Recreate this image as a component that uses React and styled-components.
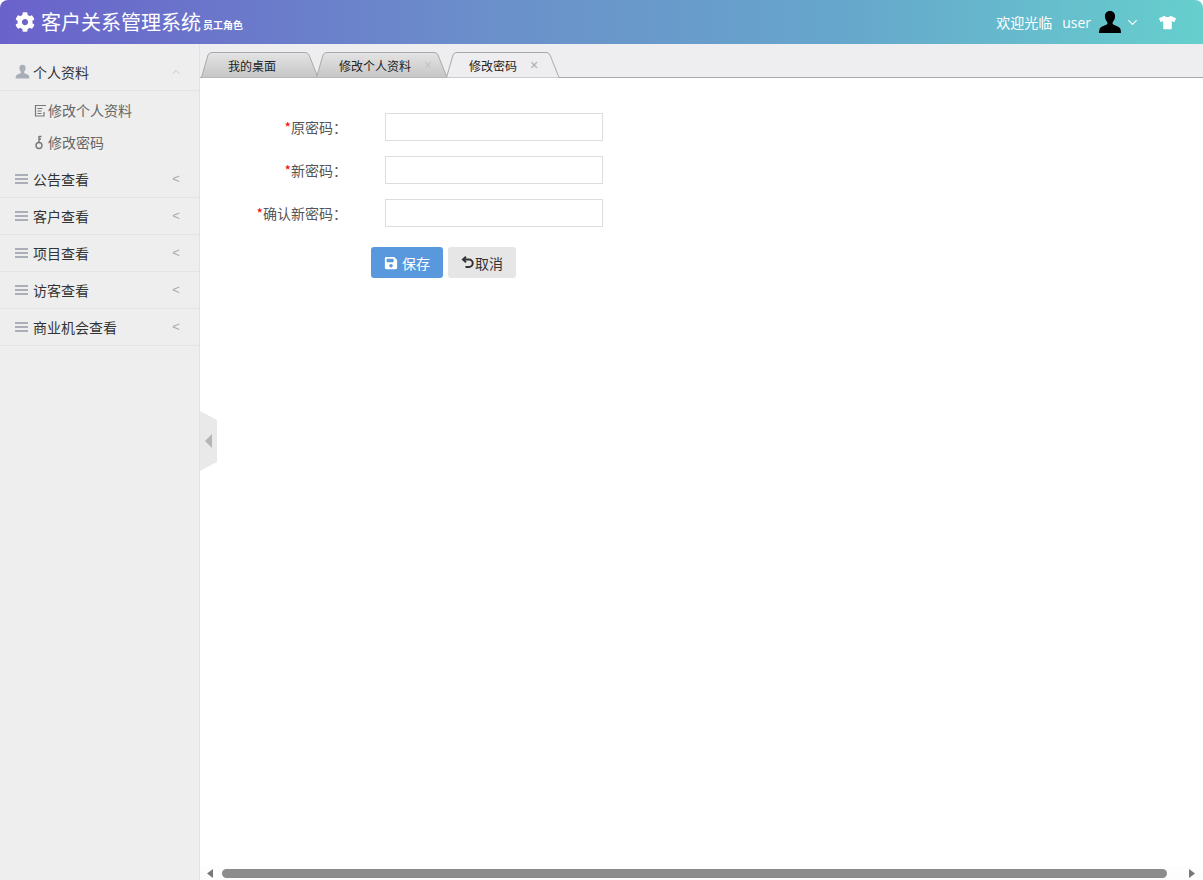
import React from "react";
import styled, { createGlobalStyle } from "styled-components";
import { FaCog, FaTshirt, FaSave } from "react-icons/fa";
import { ChevronDown, ChevronUp } from "lucide-react";

const Global = createGlobalStyle`
  html, body { margin: 0; padding: 0; height: 100%; background: #fff; overflow: hidden; }
  * { box-sizing: border-box; }
  body { font-family: "Liberation Sans", "Noto Sans CJK SC", sans-serif; font-size: 14px; color: #333; }
`;

const Page = styled.div`display: flex; flex-direction: column; width: 1203px; height: 880px; overflow: hidden;`;
const Header = styled.header`
  height: 44px; flex: none; display: flex; align-items: center; padding: 0 27px 0 15px; color: #fff;
  background: linear-gradient(to right, #6a62cb 0%, #6b8fca 40%, #66a6cc 70%, #66cfcd 100%);
  border-radius: 8px 8px 0 0;
`;
const Brand = styled.div`display: flex; align-items: center; flex: 1;`;
const Title = styled.span`font-size: 20px; margin-left: 6px; font-family: "Noto Sans CJK SC", sans-serif; font-weight: 400; line-height: 28px; letter-spacing: 0;`;
const Role = styled.small`font-size: 10px; font-weight: 700; margin: 5px 0 0 2px; font-family: "Noto Sans CJK SC", sans-serif;`;
const UserArea = styled.div`display: flex; align-items: center; font-size: 14px;`;
const Welcome = styled.span`font-family: "Noto Sans CJK SC", sans-serif; margin-right: 10px;`;
const UserName = styled.span`font-family: "Open Sans", sans-serif; margin-right: 7px;`;
const Shirt = styled.span`display: flex; margin-left: 19px;`;

const Body = styled.div`flex: 1; display: flex; min-height: 0;`;
const Sidebar = styled.aside`width: 200px; flex: none; background: #eee; border-right: 1px solid #e2e2e2; padding-top: 10px;`;
const MenuRow = styled.div`
  height: 37px; display: flex; align-items: center; padding: 0 16px 1px 15px; border-bottom: 1px solid #e4e4e4;
  font-family: "Noto Sans CJK SC", sans-serif; color: #333;
`;
const MenuIcon = styled.span`display: flex; width: 18px; flex: none;`;
const MenuLabel = styled.span`flex: 1;`;
const Caret = styled.span`color: #aaa; font-size: 13px; font-family: "Liberation Sans", sans-serif; display: flex; width: 12px; justify-content: center; margin-right: 1px;`;
const SubList = styled.div`padding: 3px 0;`;
const SubItem = styled.div`height: 32px; display: flex; align-items: center; padding-left: 34px; color: #666; font-family: "Noto Sans CJK SC", sans-serif;`;
const SubIcon = styled.span`display: flex; width: 14px; flex: none;`;

const Main = styled.main`flex: 1; display: flex; flex-direction: column; min-width: 0; position: relative;`;
const TabBar = styled.div`height: 34px; flex: none; background: #eeeef0; border-bottom: 1px solid #a8a8a8; display: flex; align-items: flex-end; padding-left: 1px;`;
const Tab = styled.div`
  position: relative; height: 26px; margin-bottom: -1px; width: ${p => p.$w}px; margin-right: ${p => p.$mr}px; flex: none;
  display: flex; align-items: center; padding-left: ${p => p.$pl}px; font-size: 12px; color: #222;
  font-family: "Noto Sans CJK SC", sans-serif;
`;
const TabShape = styled.svg`position: absolute; inset: 0; width: 100%; height: 100%;`;
const TabText = styled.span`position: relative;`;
const TabClose = styled.span`position: absolute; left: ${p => p.$x}px; top: 5px; color: ${p => p.$c}; font-size: 14px; line-height: 16px; font-family: "Liberation Sans", sans-serif;`;

const Content = styled.div`flex: 1; padding: 35px 0 0 0; min-height: 0;`;
const FormRow = styled.div`display: flex; align-items: center; height: 28px; margin-bottom: 15px;`;
const Label = styled.label`width: 147px; text-align: right; color: #555; font-family: "Noto Sans CJK SC", sans-serif; font-size: 14px; margin-right: 38px;`;
const Star = styled.span`color: #f00;`;
const Input = styled.input`width: 218px; height: 28px; border: 1px solid #ddd; background: #fff; outline: none; padding: 0 6px;`;
const Actions = styled.div`display: flex; padding: 5px 0 0 171px; gap: 5px;`;
const Button = styled.button`
  height: 31px; width: ${p => p.$w}px; border: 0; border-radius: 3px; display: flex; align-items: center; justify-content: center; padding: 0;
  background: ${p => p.$primary ? "#5a98de" : "#e6e6e6"}; color: ${p => p.$primary ? "#fff" : "#333"};
  font-family: "Noto Sans CJK SC", sans-serif; font-size: 14px;
`;
const SaveIcon = styled.span`display: flex; margin-right: 4px;`;

const Collapse = styled.svg`position: absolute; left: 0; top: 367px; width: 17px; height: 60px;`;

const ScrollBar = styled.div`height: 14px; flex: none; display: flex; align-items: center; background: #fdfdfd; padding: 0 8px 0 7px;`;
const Arrow = styled.svg`width: 6px; height: 9px; flex: none;`;
const Thumb = styled.div`flex: 1; height: 9px; margin: 0 22px 0 9px; border-radius: 5px; background: #8c8c8c;`;

const PersonIcon = ({ size, color }) => (
  <svg width={size} height={size} viewBox="0 0 24 24" fill={color}>
    <path d="M12 1c-3.4 0-5.4 2.6-5 6 .2 2 1 3.6 2.1 4.9.5.7.5 1.8 0 2.4-.8 1-5.300 1.700-7.200 3.900C1.300 19 1 21.500 1 23h22c0-1.500-.3-4-.900-4.800-1.900-2.200-6.400-2.900-7.200-3.900-.5-.6-.5-1.700 0-2.400C16 10.600 16.800 9 17 7c.4-3.400-1.600-6-5-6z" />
  </svg>
);
const Bars = () => (
  <svg width="14" height="12" viewBox="0 0 14 12" fill="#a9aeb8">
    <rect y="1" width="13" height="2" /><rect y="5" width="13" height="2" /><rect y="9" width="13" height="2" />
  </svg>
);
const EditIcon = () => (
  <svg width="13" height="13" viewBox="0 0 13 13" fill="none" stroke="#777" strokeWidth="1.200">
    <path d="M12 1.500H1.500v10.500H10V8" /><path d="M3.500 4.500h5M3.500 7h4M3.500 9.500h4" />
  </svg>
);
const KeyIcon = () => (
  <svg width="11" height="15" viewBox="0 0 11 15" fill="none" stroke="#777" strokeWidth="1.400">
    <circle cx="5" cy="10.500" r="3" /><path d="M5 7.500V1M5 1.500h2.500M5 4h2" />
  </svg>
);
const UndoIcon = () => (
  <svg width="14" height="14" viewBox="0 0 14 14" fill="none" stroke="#333" strokeWidth="2">
    <path d="M2 3.500h6a3.700 3.700 0 0 1 0 7.500H4.500" /><path d="M5 .8L2 3.500 5 6.200" />
  </svg>
);

const TabPath = ({ w, active }) => (
  <TabShape viewBox={`0 0 ${w} 26`} preserveAspectRatio="none">
    <defs>
      <linearGradient id="tabg" x1="0" y1="0" x2="0" y2="1">
        <stop offset="0" stopColor="#e4e4e4" /><stop offset="1" stopColor="#c6c6c6" />
      </linearGradient>
    </defs>
    <path d={`M0.500 25.500 L7 3 Q8 .5 11 .5 H${w - 14} Q${w - 11} .5 ${w - 10} 3 L${w - 1} 25.500`}
      fill={active ? "#eeeef0" : "url(#tabg)"} stroke="#a8a8a8" />
  </TabShape>
);

const menus = ["公告查看", "客户查看", "项目查看", "访客查看", "商业机会查看"];

export default function App() {
  return (
    <Page>
      <Global />
      <Header>
        <Brand>
          <FaCog size={20} />
          <Title>客户关系管理系统</Title>
          <Role>员工角色</Role>
        </Brand>
        <UserArea>
          <Welcome>欢迎光临</Welcome>
          <UserName>user</UserName>
          <PersonIcon size={24} color="#000" />
          <ChevronDown size={15} strokeWidth={2} style={{ marginLeft: 3 }} />
          <Shirt><FaTshirt size={17} /></Shirt>
        </UserArea>
      </Header>
      <Body>
        <Sidebar>
          <MenuRow>
            <MenuIcon><PersonIcon size={15} color="#a9aeb8" /></MenuIcon>
            <MenuLabel>个人资料</MenuLabel>
            <Caret><ChevronUp size={16} strokeWidth={1.500} color="#bbb" /></Caret>
          </MenuRow>
          <SubList>
            <SubItem><SubIcon><EditIcon /></SubIcon>修改个人资料</SubItem>
            <SubItem><SubIcon><KeyIcon /></SubIcon>修改密码</SubItem>
          </SubList>
          {menus.map(m => (
            <MenuRow key={m}>
              <MenuIcon><Bars /></MenuIcon>
              <MenuLabel>{m}</MenuLabel>
              <Caret>&lt;</Caret>
            </MenuRow>
          ))}
        </Sidebar>
        <Main>
          <TabBar>
            <Tab $w={118} $mr={-3} $pl={27}><TabPath w={118} /><TabText>我的桌面</TabText></Tab>
            <Tab $w={132} $mr={-2} $pl={23}><TabPath w={132} /><TabText>修改个人资料</TabText><TabClose $x={108} $c="#c4c4c4">×</TabClose></Tab>
            <Tab $w={114} $mr={0} $pl={23}><TabPath w={114} active /><TabText>修改密码</TabText><TabClose $x={84} $c="#aaa">×</TabClose></Tab>
          </TabBar>
          <Content>
            <FormRow><Label><Star>*</Star>原密码：</Label><Input type="text" /></FormRow>
            <FormRow><Label><Star>*</Star>新密码：</Label><Input type="text" /></FormRow>
            <FormRow><Label><Star>*</Star>确认新密码：</Label><Input type="text" /></FormRow>
            <Actions>
              <Button $primary $w={72}><SaveIcon><FaSave size={14} /></SaveIcon>保存</Button>
              <Button $w={68}><UndoIcon />取消</Button>
            </Actions>
          </Content>
          <ScrollBar>
            <Arrow viewBox="0 0 6 9"><path d="M6 0v9L0 4.500z" fill="#777" /></Arrow>
            <Thumb />
            <Arrow viewBox="0 0 6 9"><path d="M0 0v9l6-4.500z" fill="#777" /></Arrow>
          </ScrollBar>
          <Collapse viewBox="0 0 17 60">
            <path d="M0 0L17 9V51L0 60z" fill="#e9e9e9" />
            <path d="M5 30L12 23V37z" fill="#b5b5b5" />
          </Collapse>
        </Main>
      </Body>
    </Page>
  );
}
